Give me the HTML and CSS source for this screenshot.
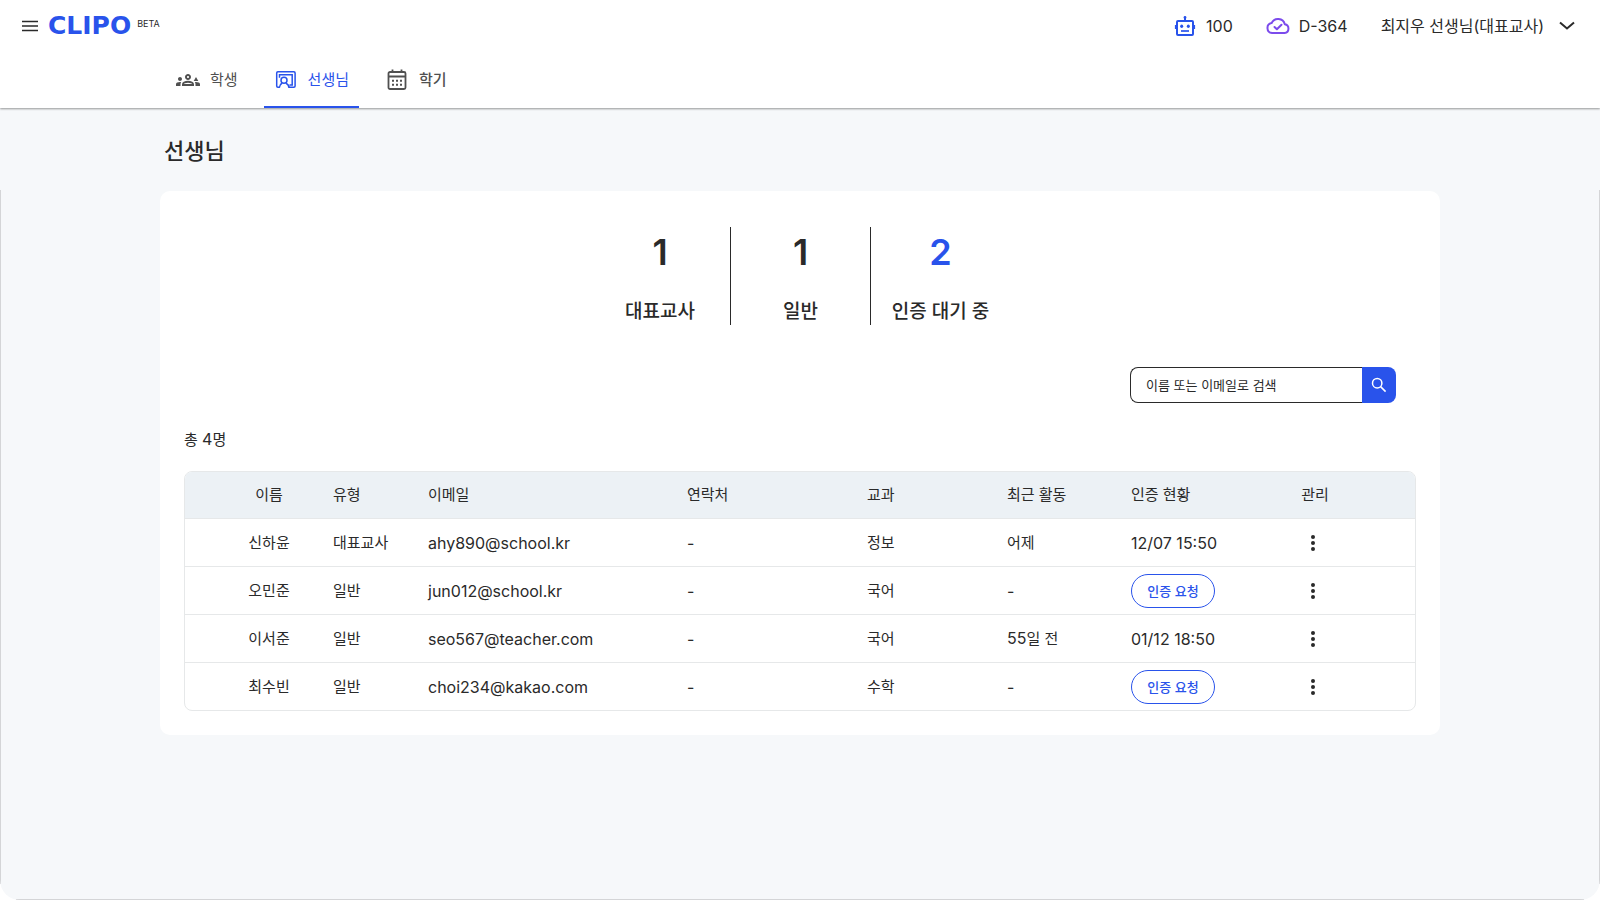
FILE: index.html
```html
<!DOCTYPE html>
<html lang="ko">
<head>
<meta charset="utf-8">
<meta name="viewport" content="width=device-width, initial-scale=1">
<title>CLIPO - 선생님</title>
<link rel="stylesheet" href="styles.css">
</head>
<body>
<header class="header">
  <div class="topbar">
    <button class="icon-btn menu-btn" type="button" aria-label="메뉴">
      <svg width="16" height="12" viewBox="0 0 16 12" fill="none" stroke="currentColor" stroke-width="1.6"><path d="M0 1.5h16M0 6h16M0 10.5h16"/></svg>
    </button>
    <a class="brand" href="#"><span class="brand-name">CLIPO</span><span class="brand-tag">BETA</span></a>
    <div class="status">
      <span class="status-item">
        <svg class="robot" width="24" height="24" viewBox="0 0 24 24" fill="none" stroke="currentColor" stroke-width="2"><rect x="4" y="7" width="16" height="14" rx="1"/><path d="M12 7V3"/><circle cx="12" cy="3.5" r="1.4" fill="currentColor" stroke="none"/><path d="M2.700 11v4M21.300 11v4" stroke-width="1.6"/><path d="M8 17h8" stroke-width="1.7"/><ellipse cx="8.7" cy="12.300" rx="1.500" ry="1.700" fill="currentColor" stroke="none"/><ellipse cx="15.300" cy="12.300" rx="1.500" ry="1.700" fill="currentColor" stroke="none"/></svg>
        100
      </span>
      <span class="status-item">
        <svg class="cloud" width="24" height="24" viewBox="0 0 24 24" fill="none" stroke="currentColor" stroke-width="2" stroke-linecap="round" stroke-linejoin="round"><path d="M6 19h12.600a4.400 4.400 0 0 0 .2-8.700A7 7 0 0 0 5.600 9.100 5 5 0 0 0 6 19z"/><path d="M8.500 13l2.400 2.300 4.600-4.500"/></svg>
        D-364
      </span>
      <button class="user-btn" type="button">최지우 선생님(대표교사)
        <svg width="16" height="10" viewBox="0 0 16 10" fill="none" stroke="currentColor" stroke-width="2"><path d="M1 1.5l7 6 7-6"/></svg>
      </button>
    </div>
  </div>
  <nav class="tabs">
    <a class="tab" href="#">
      <svg width="24" height="24" viewBox="0 0 24 24" fill="currentColor"><path d="M4 13c1.1 0 2-.9 2-2s-.9-2-2-2-2 .9-2 2 .9 2 2 2zm1.130 1.100C4.760 14.040 4.390 14 4 14c-.99 0-1.930.21-2.780.58C.48 14.900 0 15.620 0 16.430V18h4.500v-1.610c0-.83.23-1.610.63-2.290zM20 9l2.300 4h-4.600zM24 16.430c0-.81-.48-1.530-1.220-1.850A6.950 6.950 0 0 0 20 14c-.39 0-.76.04-1.130.1.400.68.63 1.460.63 2.290V18H24zM16.240 13.650C15.070 13.130 13.630 12.750 12 12.750s-3.070.39-4.240.9A2.980 2.980 0 0 0 6 16.390V18h12v-1.610c0-1.180-.68-2.260-1.760-2.740zM8.070 16c.09-.23.13-.39.91-.69.97-.38 1.990-.56 3.020-.56s2.050.18 3.020.56c.77.3.81.46.91.69zM12 8c.55 0 1 .45 1 1s-.45 1-1 1-1-.45-1-1 .45-1 1-1m0-2c-1.660 0-3 1.340-3 3s1.340 3 3 3 3-1.340 3-3-1.340-3-3-3z"/></svg>
      <span>학생</span>
    </a>
    <a class="tab tab-active" href="#" aria-current="page">
      <svg width="24" height="24" viewBox="0 0 24 24" fill="none" stroke="currentColor" stroke-width="1.500"><path d="M5.800 19.300H3.900a1.200 1.200 0 0 1-1.200-1.200V5a1.200 1.200 0 0 1 1.200-1.200h16A1.200 1.200 0 0 1 21.100 5v13.100a1.200 1.200 0 0 1-1.200 1.200h-5.200"/><path d="M5.500 9.800V6.700h12.700v10.200h-2.700"/><circle cx="10" cy="12.300" r="3"/><path d="M5.300 19.800c.2-2.500 1.200-3.800 2.800-4.800M11.900 15c1.700 1 2.900 2.300 3.200 4.800"/></svg>
      <span>선생님</span>
    </a>
    <a class="tab tab-strong" href="#">
      <svg width="24" height="24" viewBox="0 0 24 24" fill="none" stroke="currentColor" stroke-width="1.800"><rect x="3.500" y="4" width="17" height="17" rx="1.500"/><path d="M3.500 8.500h17M7.500 1.500v3M16.500 1.500v3"/><path d="M7 12.700h2m2 0h2m2 0h2M7 16.800h2m2 0h2m2 0h2" stroke-width="2"/></svg>
      <span>학기</span>
    </a>
  </nav>
</header>
<main class="page">
  <h1 class="title">선생님</h1>
  <div class="canvas">
    <section class="card">
      <dl class="stats">
        <div class="stat"><dd>1</dd><dt>대표교사</dt></div>
        <div class="stat"><dd>1</dd><dt>일반</dt></div>
        <div class="stat stat-pending"><dd>2</dd><dt>인증 대기 중</dt></div>
      </dl>
      <form class="search">
        <input class="search-input" type="text" aria-label="이름 또는 이메일로 검색" placeholder="이름 또는 이메일로 검색">
        <button class="search-btn" type="button" aria-label="검색">
          <svg width="16" height="16" viewBox="0 0 16 16" fill="none" stroke="currentColor" stroke-width="1.500"><circle cx="6.200" cy="6.200" r="4.700"/><path d="M9.600 9.600l5 5"/></svg>
        </button>
      </form>
      <p class="count">총 <span class="num">4</span>명</p>
      <div class="table-wrap">
        <table class="table">
          <colgroup><col class="c-lead"><col class="c-name"><col class="c-type"><col class="c-mail"><col class="c-phone"><col class="c-subject"><col class="c-recent"><col class="c-auth"><col class="c-manage"><col class="c-tail"></colgroup>
          <thead>
            <tr><th></th><th class="center">이름</th><th>유형</th><th>이메일</th><th>연락처</th><th>교과</th><th>최근 활동</th><th>인증 현황</th><th class="center">관리</th><th></th></tr>
          </thead>
          <tbody>
            <tr><td></td><td class="center">신하윤</td><td>대표교사</td><td class="num">ahy890@school.kr</td><td class="num">-</td><td>정보</td><td>어제</td><td class="num">12/07 15:50</td>
              <td class="center"><button class="icon-btn" type="button" aria-label="신하윤 관리"><svg width="24" height="24" viewBox="0 0 24 24" fill="currentColor"><circle cx="10" cy="6" r="2"/><circle cx="10" cy="12" r="2"/><circle cx="10" cy="18" r="2"/></svg></button></td><td></td></tr>
            <tr><td></td><td class="center">오민준</td><td>일반</td><td class="num">jun012@school.kr</td><td class="num">-</td><td>국어</td><td class="num">-</td><td><button class="pill" type="button">인증 요청</button></td>
              <td class="center"><button class="icon-btn" type="button" aria-label="오민준 관리"><svg width="24" height="24" viewBox="0 0 24 24" fill="currentColor"><circle cx="10" cy="6" r="2"/><circle cx="10" cy="12" r="2"/><circle cx="10" cy="18" r="2"/></svg></button></td><td></td></tr>
            <tr><td></td><td class="center">이서준</td><td>일반</td><td class="num">seo567@teacher.com</td><td class="num">-</td><td>국어</td><td><span class="num">55</span>일 전</td><td class="num">01/12 18:50</td>
              <td class="center"><button class="icon-btn" type="button" aria-label="이서준 관리"><svg width="24" height="24" viewBox="0 0 24 24" fill="currentColor"><circle cx="10" cy="6" r="2"/><circle cx="10" cy="12" r="2"/><circle cx="10" cy="18" r="2"/></svg></button></td><td></td></tr>
            <tr><td></td><td class="center">최수빈</td><td>일반</td><td class="num">choi234@kakao.com</td><td class="num">-</td><td>수학</td><td class="num">-</td><td><button class="pill" type="button">인증 요청</button></td>
              <td class="center"><button class="icon-btn" type="button" aria-label="최수빈 관리"><svg width="24" height="24" viewBox="0 0 24 24" fill="currentColor"><circle cx="10" cy="6" r="2"/><circle cx="10" cy="12" r="2"/><circle cx="10" cy="18" r="2"/></svg></button></td><td></td></tr>
          </tbody>
        </table>
      </div>
    </section>
  </div>
</main>
</body>
</html>
```
FILE: styles.css
```css
* { box-sizing: border-box; }

body {
  margin: 0;
  min-height: 100vh;
  display: flex;
  flex-direction: column;
  background: #fff;
  color: #2a2a2a;
  font: 400 15px/24px Inter, "Noto Sans CJK KR", sans-serif;
}

a { color: inherit; text-decoration: none; }
button, input { font: inherit; color: inherit; margin: 0; }
button { border: 0; padding: 0; background: none; cursor: pointer; }
svg { display: block; flex: none; }

.num { font-size: 16px; }

.header {
  position: relative;
  background: #fff;
  box-shadow: 0 1px 2px rgba(0, 0, 0, 0.4);
}

.topbar {
  display: flex;
  align-items: center;
  height: 52px;
  padding: 0 25px 0 22px;
}

.icon-btn { display: inline-flex; vertical-align: middle; }
.menu-btn { margin-right: 10px; }

.brand { display: flex; align-items: center; gap: 6px; }
.brand-name {
  color: #2953eb;
  font: 700 25px/24px "DejaVu Sans", sans-serif;
}
.brand-tag { font-size: 9px; line-height: 20px; margin-bottom: 4px; }

.status {
  display: flex;
  align-items: center;
  gap: 33px;
  margin-left: auto;
  font-size: 16px;
}
.status-item { display: flex; align-items: center; gap: 9px; }
.robot { color: #2953eb; }
.cloud { color: #7c4bec; }
.user-btn { display: flex; align-items: center; gap: 15px; }

.tabs {
  display: flex;
  gap: 16px;
  width: 100%;
  max-width: 1268px;
  height: 56px;
  margin: 0 auto;
  color: #505050;
}
.tab {
  display: flex;
  align-items: center;
  gap: 10px;
  padding: 2px 10px 0;
  border-bottom: 2px solid transparent;
}
.tab-strong { font-weight: 500; }
.tab-active { color: #2953eb; border-color: #2953eb; }

.page {
  flex: 1;
  display: flex;
  flex-direction: column;
  background: #f6f8fa;
  border-radius: 0 0 20px 20px;
}

.title {
  width: 100%;
  max-width: 1272px;
  margin: 27px auto 23px;
  font-size: 22px;
  font-weight: 500;
  line-height: 32px;
}

.canvas {
  flex: 1;
  padding: 1px 0 24px;
  border-radius: 0 0 20px 20px;
  background:
    linear-gradient(#d4d5d7, #d4d5d7) left top / 1px calc(100% - 16px) no-repeat,
    linear-gradient(#d4d5d7, #d4d5d7) right top / 1px calc(100% - 16px) no-repeat,
    linear-gradient(#d4d5d7, #d4d5d7) center bottom / calc(100% - 32px) 1px no-repeat;
}

.card {
  max-width: 1280px;
  margin: 0 auto;
  padding: 36px 24px 24px;
  border-radius: 10px;
  background: #fff;
}

.stats {
  display: flex;
  justify-content: center;
  margin: 0 0 42px;
}
.stat {
  display: flex;
  flex-direction: column;
  gap: 24px;
  width: 140px;
  padding: 3px 0 0;
  text-align: center;
}
.stat + .stat { border-left: 1px solid #2a2a2a; }
.stat dd { margin: 0; font-size: 36px; font-weight: 600; line-height: 44px; }
.stat dt { font-size: 19px; font-weight: 500; line-height: 27px; }
.stat-pending dd { color: #2953eb; }

.search {
  display: flex;
  justify-content: flex-end;
  margin: 0 20px 24px 0;
}
.search-input {
  width: 232px;
  height: 36px;
  padding: 0 15px;
  border: 1px solid #2a2a2a;
  border-right: 0;
  border-radius: 8px 0 0 8px;
  background: #fff;
  font-size: 13px;
}
.search-input::placeholder { color: #2a2a2a; opacity: 1; }
.search-btn {
  display: flex;
  align-items: center;
  justify-content: center;
  width: 34px;
  height: 36px;
  border-radius: 0 8px 8px 0;
  background: #2953eb;
  color: #fff;
}

.count { margin: 0 0 19px; }

.table-wrap {
  border: 1px solid #e6e8e9;
  border-radius: 8px;
  overflow: hidden;
}
.table {
  width: 100%;
  table-layout: fixed;
  border-collapse: separate;
  border-spacing: 0;
}
.table th, .table td {
  height: 48px;
  padding: 0;
  border-bottom: 1px solid #e6e8e9;
  font-weight: 400;
  text-align: left;
  white-space: nowrap;
}
.table th { height: 47px; background: #ecf1f5; }
.table tbody tr:last-child td { height: 47px; border-bottom: 0; }
.table .center { text-align: center; }

.c-lead { width: 20px; }
.c-name { width: 128px; }
.c-type { width: 95px; }
.c-mail { width: 259px; }
.c-phone { width: 180px; }
.c-subject { width: 140px; }
.c-recent { width: 124px; }
.c-auth { width: 124px; }
.c-manage { width: 120px; }
.c-tail { width: 40px; }

.pill {
  display: block;
  width: 84px;
  height: 34px;
  border: 1px solid #2953eb;
  border-radius: 17px;
  color: #2953eb;
  font-size: 13px;
  font-weight: 500;
}
```
